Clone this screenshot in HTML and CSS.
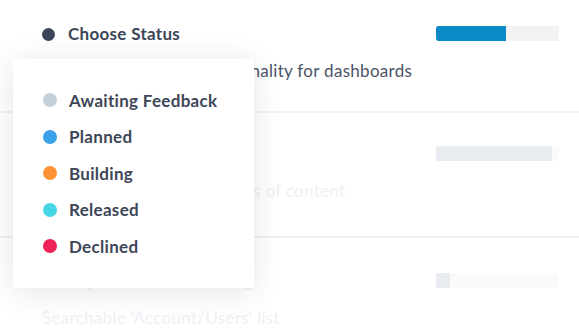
FILE: index.html
```html
<!DOCTYPE html>
<html lang="en">
<head>
  <meta charset="UTF-8" />
  <title>Roadmap Status</title>
  <link rel="stylesheet" href="styles.css">
</head>
<body>
<div class="board">
  <div class="row row-first">
    <div class="row-main">
      <div class="row-title">
        <span class="dot dot-dark"></span>
        <span>Choose Status</span>
      </div>
      <div class="row-desc">Improved reporting functionality for dashboards</div>
    </div>
    <div class="bar"><div class="bar-fill fill-blue" style="width: 57%"></div></div>
  </div>

  <div class="row row-faded">
    <div class="row-main">
      <div class="row-title">
        <span class="dot dot-faded"></span>
        <span>Content Scheduling</span>
      </div>
      <div class="row-desc">Publish or schedule all types of content</div>
    </div>
    <div class="bar"><div class="bar-fill fill-faded" style="width: 94%"></div></div>
  </div>

  <div class="row row-faded row-last">
    <div class="row-main">
      <div class="row-title">
        <span class="dot dot-faded"></span>
        <span>Improve User Searching</span>
      </div>
      <div class="row-desc">Searchable 'Account/Users' list</div>
    </div>
    <div class="bar"><div class="bar-fill fill-faded" style="width: 11%"></div></div>
  </div>

  <!-- status dropdown -->
  <div class="status-menu">
    <div class="status-item"><span class="dot dot-awaiting"></span>Awaiting Feedback</div>
    <div class="status-item"><span class="dot dot-planned"></span>Planned</div>
    <div class="status-item"><span class="dot dot-building"></span>Building</div>
    <div class="status-item"><span class="dot dot-released"></span>Released</div>
    <div class="status-item"><span class="dot dot-declined"></span>Declined</div>
  </div>
</div>
</body>
</html>
```

FILE: styles.css
```css
html, body {
  margin: 0;
  padding: 0;
  background: white;
  overflow: hidden;
  font-family: 'Lato', sans-serif;
}

.board {
  position: relative;
  width: 579px;
  height: 330px;
  overflow: hidden;
}

/* rows of the roadmap list */
.row {
  display: flex;
  justify-content: space-between;
  box-sizing: border-box;
  height: 125px;
  padding: 33px 20px 0 42px;
  border-bottom: 2px solid #eef2f6;
}
.row-first {
  height: 113px;
  padding-top: 26px;
}
.row-last {
  padding-top: 35px;
}

.row-title {
  display: flex;
  align-items: center;
  gap: 13px;
  margin-top: -2px;
  font-size: 17px;
  font-weight: bold;
  letter-spacing: 0.3px;
  line-height: 20px;
  color: #3d4658;
}
.row-desc {
  margin-top: 17px;
  font-size: 17px;
  letter-spacing: 0.3px;
  line-height: 20px;
  color: #4a5366;
}

.row-faded .row-title,
.row-faded .row-desc {
  color: #eef1f5;
}

.dot {
  display: inline-block;
  width: 13px;
  height: 13px;
  border-radius: 50%;
  flex-shrink: 0;
}
.dot-dark { background: #3d4658; }
.dot-faded { background: #eef1f5; }

/* progress bars */
.bar {
  width: 123px;
  height: 15px;
  border-radius: 2px;
  background: #fafafa;
  overflow: hidden;
}
.row-first .bar { background: #f2f2f2; }
.bar-fill {
  height: 100%;
  border-radius: 2px 0 0 2px;
}
.fill-blue { background: #0a8ac6; }
.fill-faded { background: #e8ecf0; }

/* status dropdown */
.status-menu {
  position: absolute;
  left: 13px;
  top: 59px;
  width: 241px;
  height: 229px;
  box-sizing: border-box;
  padding: 23px 0 0 30px;
  background: white;
  box-shadow: 0 4px 28px rgba(30, 40, 60, 0.12);
}
.status-item {
  display: flex;
  align-items: center;
  gap: 12px;
  height: 36.5px;
  font-size: 17px;
  font-weight: bold;
  letter-spacing: 0.3px;
  color: #3d4658;
}
.status-item .dot {
  width: 14px;
  height: 14px;
}
.dot-awaiting { background: #c2d0dc; }
.dot-planned { background: #3aa1ea; }
.dot-building { background: #ff9233; }
.dot-released { background: #46d6e5; }
.dot-declined { background: #ee2258; }
```
